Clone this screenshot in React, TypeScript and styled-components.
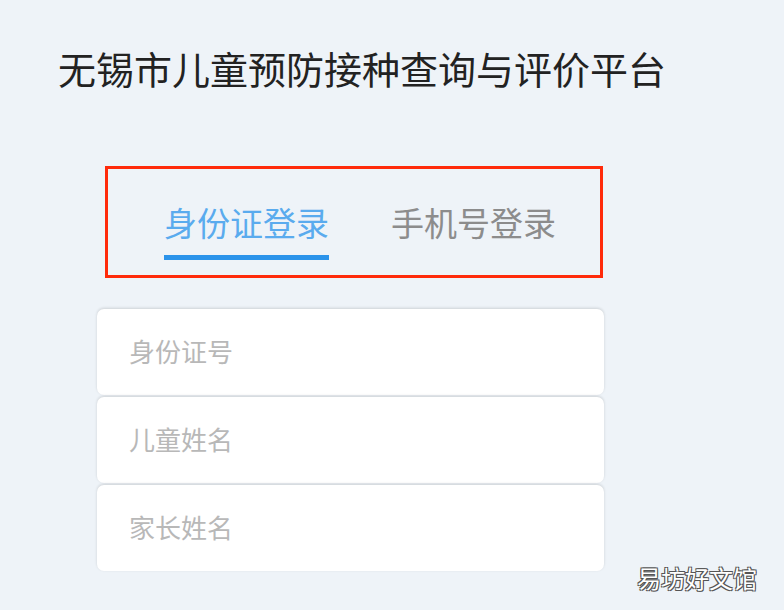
import styled, { createGlobalStyle } from 'styled-components';

const GlobalStyle = createGlobalStyle`
  html, body {
    margin: 0;
    padding: 0;
    background-color: #eef3f8;
  }
  * {
    box-sizing: border-box;
  }
`;

const Page = styled.div`
  position: relative;
  width: 784px;
  height: 610px;
  padding: 40px 0 0 58px;
  background-color: #eef3f8;
  font-family: 'Noto Sans CJK SC', 'Noto Sans', sans-serif;
  overflow: hidden;
`;

const Title = styled.h1`
  margin: 0;
  font-size: 38px;
  line-height: 56px;
  font-weight: 400;
  color: #222;
`;

const TabBox = styled.div`
  display: flex;
  gap: 62px;
  width: 498px;
  height: 112px;
  margin: 70px 0 0 47px;
  padding: 33px 0 0 56px;
  border: 3px solid #ff2a0a;
`;

const Tab = styled.div<{ $active?: boolean }>`
  display: flex;
  flex-direction: column;
  font-size: 33px;
  line-height: 40px;
  color: ${(p) => (p.$active ? '#5aabee' : '#8c8c8c')};
  cursor: pointer;
`;

const Underline = styled.div`
  height: 5px;
  margin-top: 13px;
  background-color: #2b93ea;
`;

const Fields = styled.div`
  display: flex;
  flex-direction: column;
  gap: 2px;
  width: 507px;
  margin: 31px 0 0 39px;
`;

const Field = styled.input`
  height: 86px;
  padding: 0 0 4px 32px;
  border: none;
  border-radius: 7px;
  background-color: #fff;
  box-shadow: 0 -1px 3px rgba(0, 0, 0, 0.14);
  font-family: inherit;
  font-size: 26px;
  color: #333;
  outline: none;

  &::placeholder {
    color: #b8b8b8;
  }
`;

const Watermark = styled.div`
  position: absolute;
  right: 27px;
  top: 562px;
  font-size: 24px;
  line-height: 32px;
  color: #fff;
  text-shadow: -1px -1px 0 #555, 1px -1px 0 #555, -1px 1px 0 #555, 1px 1px 0 #555;
`;

const App = () => {
  return (
    <>
      <GlobalStyle />
      <Page>
        <Title>无锡市儿童预防接种查询与评价平台</Title>
        <TabBox>
          <Tab $active>
            身份证登录
            <Underline />
          </Tab>
          <Tab>手机号登录</Tab>
        </TabBox>
        <Fields>
          <Field placeholder="身份证号" />
          <Field placeholder="儿童姓名" />
          <Field placeholder="家长姓名" />
        </Fields>
        <Watermark>易坊好文馆</Watermark>
      </Page>
    </>
  );
};

export default App;
